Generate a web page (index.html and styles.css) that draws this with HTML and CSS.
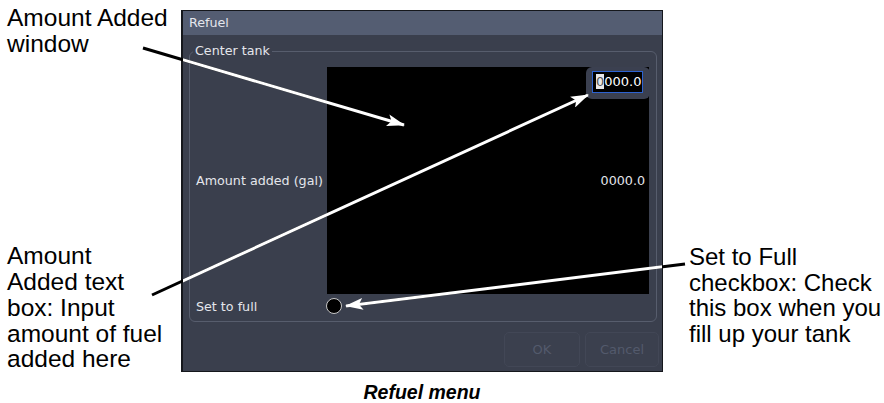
FILE: index.html
```html
<!DOCTYPE html>
<html>
<head>
  <title>Refuel menu</title>
  <link rel="stylesheet" href="styles.css">
</head>
<body>
  <div class="page">
    <div class="notes notes-left">
      <p class="note">Amount Added<br>window</p>
      <p class="note">Amount<br>Added text<br>box: Input<br>amount of fuel<br>added here</p>
    </div>

    <div class="figure">
      <div class="dialog">
        <div class="dialog-title">Refuel</div>
        <fieldset class="group">
          <legend>Center tank</legend>
          <div class="field-label">Amount added (gal)</div>
          <div class="amount-window">
            <span class="amount-value">0000.0</span>
            <div class="editor">
              <div class="editor-input"><span class="caret">0</span>000.0</div>
            </div>
          </div>
          <div class="field-label">Set to full</div>
          <div class="check-cell"><span class="checkbox"></span></div>
        </fieldset>
        <div class="actions">
          <button class="btn btn-ok">OK</button>
          <button class="btn btn-cancel">Cancel</button>
        </div>
      </div>
      <p class="caption">Refuel menu</p>
    </div>

    <div class="notes notes-right">
      <p class="note">Set to Full<br>checkbox: Check<br>this box when you<br>fill up your tank</p>
    </div>

    <!-- callout arrows, black outside the dialog and white on top of it -->
    <svg class="arrows" width="884" height="403" viewBox="0 0 884 403">
      <defs>
        <clipPath id="dialog-area">
          <rect x="183" y="11" width="479" height="360"/>
        </clipPath>
        <marker id="head" markerUnits="userSpaceOnUse" viewBox="0 0 18 12" refX="17" refY="6" markerWidth="18" markerHeight="12" orient="auto">
          <path d="M0,0 L18,6 L0,12 L4,6 z" fill="#fff"/>
        </marker>
      </defs>
      <g stroke="#000" stroke-width="3">
        <line x1="143" y1="48" x2="404" y2="125"/>
        <line x1="152" y1="295" x2="588" y2="95"/>
        <line x1="685" y1="264" x2="346" y2="306"/>
      </g>
      <g stroke="#fff" stroke-width="3" clip-path="url(#dialog-area)">
        <line x1="143" y1="48" x2="404" y2="125" marker-end="url(#head)"/>
        <line x1="152" y1="295" x2="588" y2="95" marker-end="url(#head)"/>
        <line x1="685" y1="264" x2="346" y2="306" marker-end="url(#head)"/>
      </g>
    </svg>
  </div>
</body>
</html>
```

FILE: styles.css
```css
body {
  margin: 0;
  background-color: #fff;
}

.page {
  position: relative;
  width: 884px;
  height: 403px;
  display: flex;
  font-family: "Liberation Sans", Arial, sans-serif;
}

.note {
  margin: 0;
  font-size: 24px;
  line-height: 25.7px;
  color: #000;
  white-space: nowrap;
}

.notes-left {
  width: 181px;
  flex-shrink: 0;
  height: 372px;
  padding: 5px 0 0 7px;
  box-sizing: border-box;
  display: flex;
  flex-direction: column;
  justify-content: space-between;
}

.notes-left .note {
  font-size: 24.5px;
}

.notes-right {
  padding: 244px 0 0 26px;
}

.figure {
  width: 482px;
  flex-shrink: 0;
}

.dialog {
  margin-top: 10px;
  height: 362px;
  box-sizing: border-box;
  border: 1px solid #15171c;
  border-left-width: 2px;
  background-color: #3a3f4d;
  display: flex;
  flex-direction: column;
  font-family: "DejaVu Sans", sans-serif;
  font-size: 12.7px;
  color: #e4e6ec;
}

.dialog-title {
  height: 24px;
  line-height: 23px;
  padding-left: 6px;
  background-color: #545d72;
}

.group {
  margin: 9px 5px 0 6px;
  padding: 9px 7px 7px 6px;
  border: 1px solid #575d6d;
  border-radius: 6px;
  display: grid;
  grid-template-columns: 131px 1fr;
  row-gap: 4px;
}

.group legend {
  padding: 0 2px;
  margin-left: -3px;
  line-height: 14px;
}

.field-label {
  align-self: center;
  white-space: nowrap;
}

.amount-window {
  position: relative;
  height: 227px;
  background-color: #000;
  display: flex;
  align-items: center;
  justify-content: flex-end;
  padding-right: 4px;
}

.editor {
  position: absolute;
  top: 0;
  right: -1px;
  width: 64px;
  height: 32px;
  padding: 4px 7px 0 6px;
  box-sizing: border-box;
  border-radius: 6px;
  background-color: #3b4050;
}

.editor-input {
  height: 22px;
  box-sizing: border-box;
  border: 1px solid #2d62d0;
  background-color: #000;
  color: #fff;
  font-size: 13px;
  line-height: 20px;
  padding-left: 3px;
}

.caret {
  background-color: #e8e8ea;
  color: #555;
}

.check-cell {
  height: 16px;
}

.checkbox {
  display: block;
  width: 16px;
  height: 16px;
  margin-left: -1px;
  box-sizing: border-box;
  border: 1px solid #c8c8c8;
  border-radius: 50%;
  background-color: #000;
}

.actions {
  display: flex;
  justify-content: flex-end;
  gap: 5px;
  margin-top: 10px;
  padding-right: 3px;
}

.btn {
  height: 35px;
  border: 1px solid #424756;
  border-radius: 5px;
  background-color: #3b404e;
  color: #535a6c;
  font-family: "DejaVu Sans", sans-serif;
  font-size: 13px;
}

.btn-ok {
  width: 76px;
}

.btn-cancel {
  width: 74px;
}

.caption {
  margin: 0;
  padding-top: 11px;
  text-align: center;
  font-size: 19.5px;
  line-height: 18px;
  font-weight: bold;
  font-style: italic;
}

.arrows {
  position: absolute;
  left: 0;
  top: 0;
  pointer-events: none;
}
```
